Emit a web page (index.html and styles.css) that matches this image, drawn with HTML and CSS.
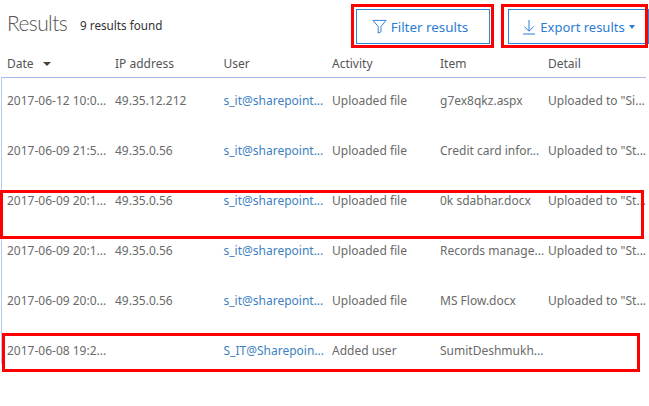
FILE: index.html
```html
<!DOCTYPE html>
<html lang="en">
<head>
<meta charset="utf-8">
<title>Results</title>
<link rel="stylesheet" href="styles.css">
</head>
<body>
<main class="page">
  <header class="top">
    <h1 class="title">Results</h1>
    <span class="count">9 results found</span>
    <button class="btn btn-filter">
      <svg class="ico" width="15" height="15" viewBox="0 0 16 16"><path d="M1 1.500h14L9.600 8v5.600L6.600 15V8z" fill="none" stroke="currentColor" stroke-width="1"/></svg>
      Filter results
    </button>
    <button class="btn btn-export">
      <svg class="ico" width="14" height="16" viewBox="0 0 14 16"><path d="M7 1v11M2.500 7.800 7 12.200l4.500-4.400M1 15h12" fill="none" stroke="currentColor" stroke-width="1"/></svg>
      Export results
      <span class="caret"></span>
    </button>
  </header>
  <div class="grid head">
    <span class="date-h">Date <span class="sort"></span></span>
    <span>IP address</span><span>User</span><span>Activity</span><span>Item</span><span>Detail</span>
  </div>
  <section class="list">
    <div class="grid row"><span>2017-06-12 10:0...</span><span>49.35.12.212</span><a>s_it@sharepoint...</a><span>Uploaded file</span><span>g7ex8qkz.aspx</span><span>Uploaded to "Si...</span></div>
    <div class="grid row"><span>2017-06-09 21:5...</span><span>49.35.0.56</span><a>s_it@sharepoint...</a><span>Uploaded file</span><span>Credit card infor...</span><span>Uploaded to "St...</span></div>
    <div class="grid row"><span>2017-06-09 20:1...</span><span>49.35.0.56</span><a>s_it@sharepoint...</a><span>Uploaded file</span><span>0k sdabhar.docx</span><span>Uploaded to "St...</span></div>
    <div class="grid row"><span>2017-06-09 20:1...</span><span>49.35.0.56</span><a>s_it@sharepoint...</a><span>Uploaded file</span><span>Records manage...</span><span>Uploaded to "St...</span></div>
    <div class="grid row"><span>2017-06-09 20:0...</span><span>49.35.0.56</span><a>s_it@sharepoint...</a><span>Uploaded file</span><span>MS Flow.docx</span><span>Uploaded to "St...</span></div>
    <div class="grid row last"><span>2017-06-08 19:2...</span><span></span><a>S_IT@Sharepoin...</a><span>Added user</span><span>SumitDeshmukh...</span><span></span></div>
  </section>
</main>
<div class="mark mark-filter"></div>
<div class="mark mark-export"></div>
<div class="mark mark-row"></div>
<div class="mark mark-last"></div>
</body>
</html>
```
FILE: styles.css
```css
html, body { margin: 0; padding: 0; background: #fff; }
body { width: 649px; height: 406px; overflow: hidden; position: relative; font-family: "Noto Sans", "Open Sans", sans-serif; font-size: 12px; color: #605e5c; }
.page { display: flex; flex-direction: column; }
.top { display: flex; align-items: center; height: 53px; padding-left: 7px; box-sizing: border-box; }
.title { margin: 0 0 7px; font-weight: 300; font-size: 21px; line-height: 28px; letter-spacing: -0.6px; color: #555; font-family: "Lato", sans-serif; }
.count { margin: 0 0 3px 13px; font-size: 11.700px; color: #333; flex: 1; }
.btn { height: 35px; box-sizing: border-box; background: #fff; border: 1px solid #2b88d8; color: #2b7cd3; font: inherit; font-size: 13px; display: flex; align-items: center; justify-content: center; gap: 4px; padding: 0; }
.btn-filter { width: 134px; margin-right: 18px; padding-right: 6px; font-size: 13.400px; }
.btn-export { width: 141px; flex: none; }
.caret { width: 0; height: 0; border: 3.500px solid transparent; border-top: 4px solid #2b7cd3; border-bottom: 0; }
.grid { display: grid; grid-template-columns: 108px 108.500px 108.500px 108px 108px 108px; padding-left: 7px; white-space: nowrap; }
.head { height: 24px; box-sizing: border-box; padding-bottom: 2px; line-height: 20px; align-items: center; color: #555; }
.sort { display: inline-block; width: 0; height: 0; border: 4px solid transparent; border-top: 4px solid #444; border-bottom: 0; margin-left: 6px; vertical-align: 2px; }
.list { margin-left: 1px; width: 645px; border-top: 1px solid #a6b9e8; border-left: 1px solid #b7c9f0; box-sizing: border-box; }
.row { height: 50px; box-sizing: border-box; padding: 15px 0 0 5px; line-height: 16px; align-items: start; color: #6a6a6a; }
.row.last { height: 36px; }
.row a { color: #3d7fc1; }
.mark { position: absolute; border: 3px solid #f00; box-sizing: border-box; }
.mark-filter { left: 351px; top: 4px; width: 143px; height: 44px; }
.mark-export { left: 501px; top: 4px; width: 147px; height: 44px; }
.mark-row { left: 0; top: 190px; width: 644px; height: 49px; }
.mark-last { left: 2px; top: 333px; width: 638px; height: 39px; }
```
